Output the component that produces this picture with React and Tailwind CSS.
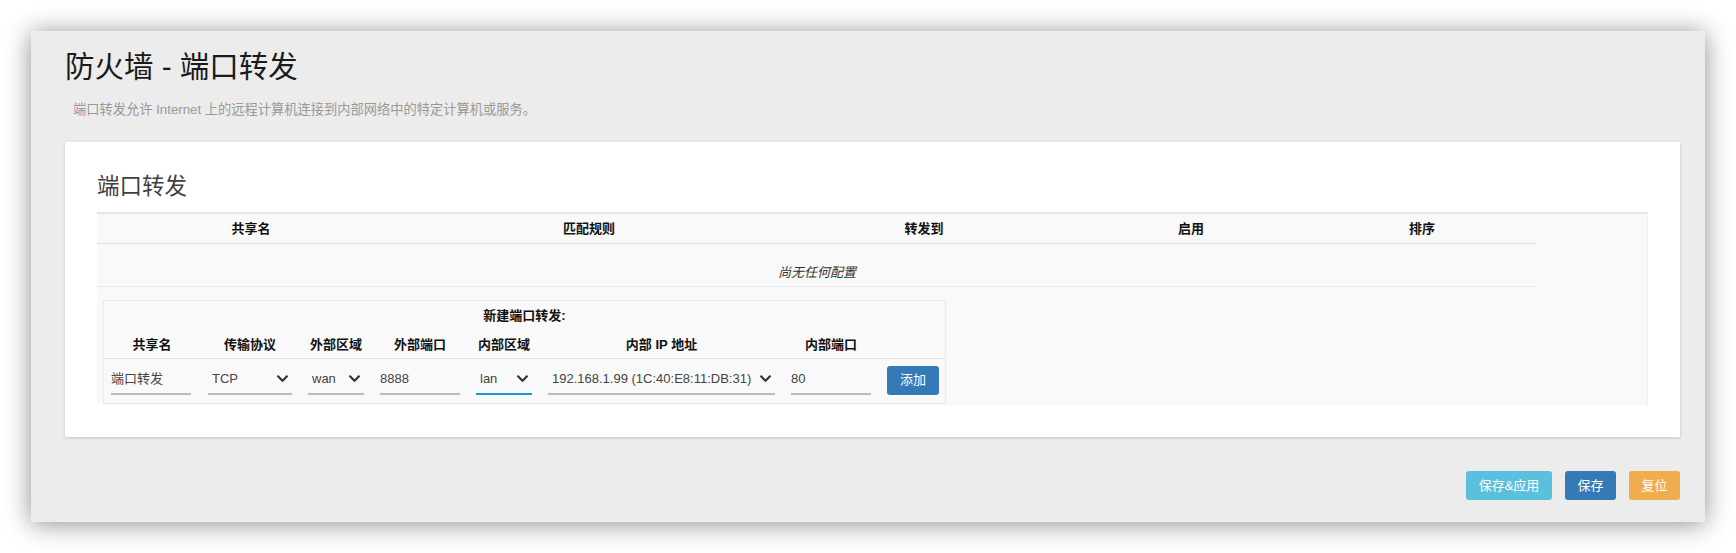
import React from "react";

const FONT = { fontFamily: '"Liberation Sans", "Noto Sans CJK SC", sans-serif' };

function Chevron() {
  return (
    <svg width="11" height="8" viewBox="0 0 11 8" className="shrink-0">
      <path d="M1.2 1.5 L5.5 5.8 L9.8 1.5" fill="none" stroke="#333" strokeWidth="2.2" strokeLinecap="square" />
    </svg>
  );
}

function Select({ value, w, focus }) {
  return (
    <div
      className={`flex items-center justify-between h-[30px] pl-[4px] pr-[4px] border-b-2 ${focus ? "border-[#1a9bd0]" : "border-[#bbb]"} text-[13px] text-[#444] ${w}`}
    >
      <span className="whitespace-nowrap">{value}</span>
      <Chevron />
    </div>
  );
}

function Input({ value, w }) {
  return (
    <div className={`flex items-center h-[30px] border-b-2 border-[#bbb] text-[13px] text-[#444] ${w}`}>
      <span className="whitespace-nowrap">{value}</span>
    </div>
  );
}

export default function App() {
  return (
    <div className="bg-white w-[1736px] h-[553px] p-[31px]" style={FONT}>
      <div className="bg-[#ececec] h-[491px] pl-[34px] pr-[25px] pt-[17px] shadow-[0_2px_24px_rgba(0,0,0,0.45)]">
        <h2 className="text-[29.5px] leading-[38px] text-[#1a1a1a]">防火墙 - 端口转发</h2>
        <div className="text-[13.25px] leading-[20px] text-[#999] pl-[8px] mt-[14px]">
          端口转发允许 Internet 上的远程计算机连接到内部网络中的特定计算机或服务。
        </div>
        <div className="bg-white mt-[22px] px-[32px] pt-[30px] pb-[32px] shadow-[0_1px_3px_rgba(0,0,0,0.18)]">
          <h3 className="text-[22.5px] leading-[30px] text-[#404040]">端口转发</h3>
          <div className="mt-[10px] bg-[#f9f9f9] border-t-2 border-[#e6e6e6] border-r border-r-[#eee] pb-[1px]">
            <div className="w-[1440px]">
              <div className="grid grid-cols-[308px_368px_302px_232px_230px] h-[30px] items-center border-b border-[#ddd] text-[13px] font-bold text-[#111]">
                <div className="text-center">共享名</div>
                <div className="text-center">匹配规则</div>
                <div className="text-center">转发到</div>
                <div className="text-center">启用</div>
                <div className="text-center">排序</div>
              </div>
              <div className="h-[43px] pt-[19px] border-b border-[#eaeaea] text-center text-[13px] leading-[20px] italic text-[#333]">
                尚无任何配置
              </div>
            </div>
            <div className="ml-[6px] mt-[13px] w-[843px] border border-[#eaeaea]">
              <div className="h-[30px] flex items-center justify-center text-[13px] font-bold text-[#111]">
                新建端口转发:
              </div>
              <div className="grid grid-cols-[96px_100px_72px_96px_72px_243px_96px_66px] h-[28px] items-center border-b border-[#e2e2e2] text-[13px] font-bold text-[#111]">
                <div className="text-center">共享名</div>
                <div className="text-center">传输协议</div>
                <div className="text-center">外部区域</div>
                <div className="text-center">外部端口</div>
                <div className="text-center">内部区域</div>
                <div className="text-center">内部 IP 地址</div>
                <div className="text-center">内部端口</div>
                <div></div>
              </div>
              <div className="grid grid-cols-[96px_100px_72px_96px_72px_243px_96px_66px] items-center pt-[6px] pb-[8px]">
                <div className="px-[7px]"><Input value="端口转发" w="w-[80px]" /></div>
                <div className="px-[8px]"><Select value="TCP" w="w-[84px]" /></div>
                <div className="px-[8px]"><Select value="wan" w="w-[56px]" /></div>
                <div className="px-[8px]"><Input value="8888" w="w-[80px]" /></div>
                <div className="px-[8px]"><Select value="lan" w="w-[56px]" focus /></div>
                <div className="px-[8px]"><Select value="192.168.1.99 (1C:40:E8:11:DB:31)" w="w-[227px]" /></div>
                <div className="px-[8px]"><Input value="80" w="w-[80px]" /></div>
                <div className="px-[8px]">
                  <button className="w-[52px] h-[29px] rounded-[3px] bg-[#337ab7] text-white text-[13px]">添加</button>
                </div>
              </div>
            </div>
          </div>
        </div>
        <div className="flex justify-end gap-[13px] mt-[34px]">
          <button className="w-[86px] h-[29px] rounded-[3px] bg-[#5bc0de] text-white text-[13px]">保存&amp;应用</button>
          <button className="w-[51px] h-[29px] rounded-[3px] bg-[#337ab7] text-white text-[13px]">保存</button>
          <button className="w-[51px] h-[29px] rounded-[3px] bg-[#f0ad4e] text-white text-[13px]">复位</button>
        </div>
      </div>
    </div>
  );
}
